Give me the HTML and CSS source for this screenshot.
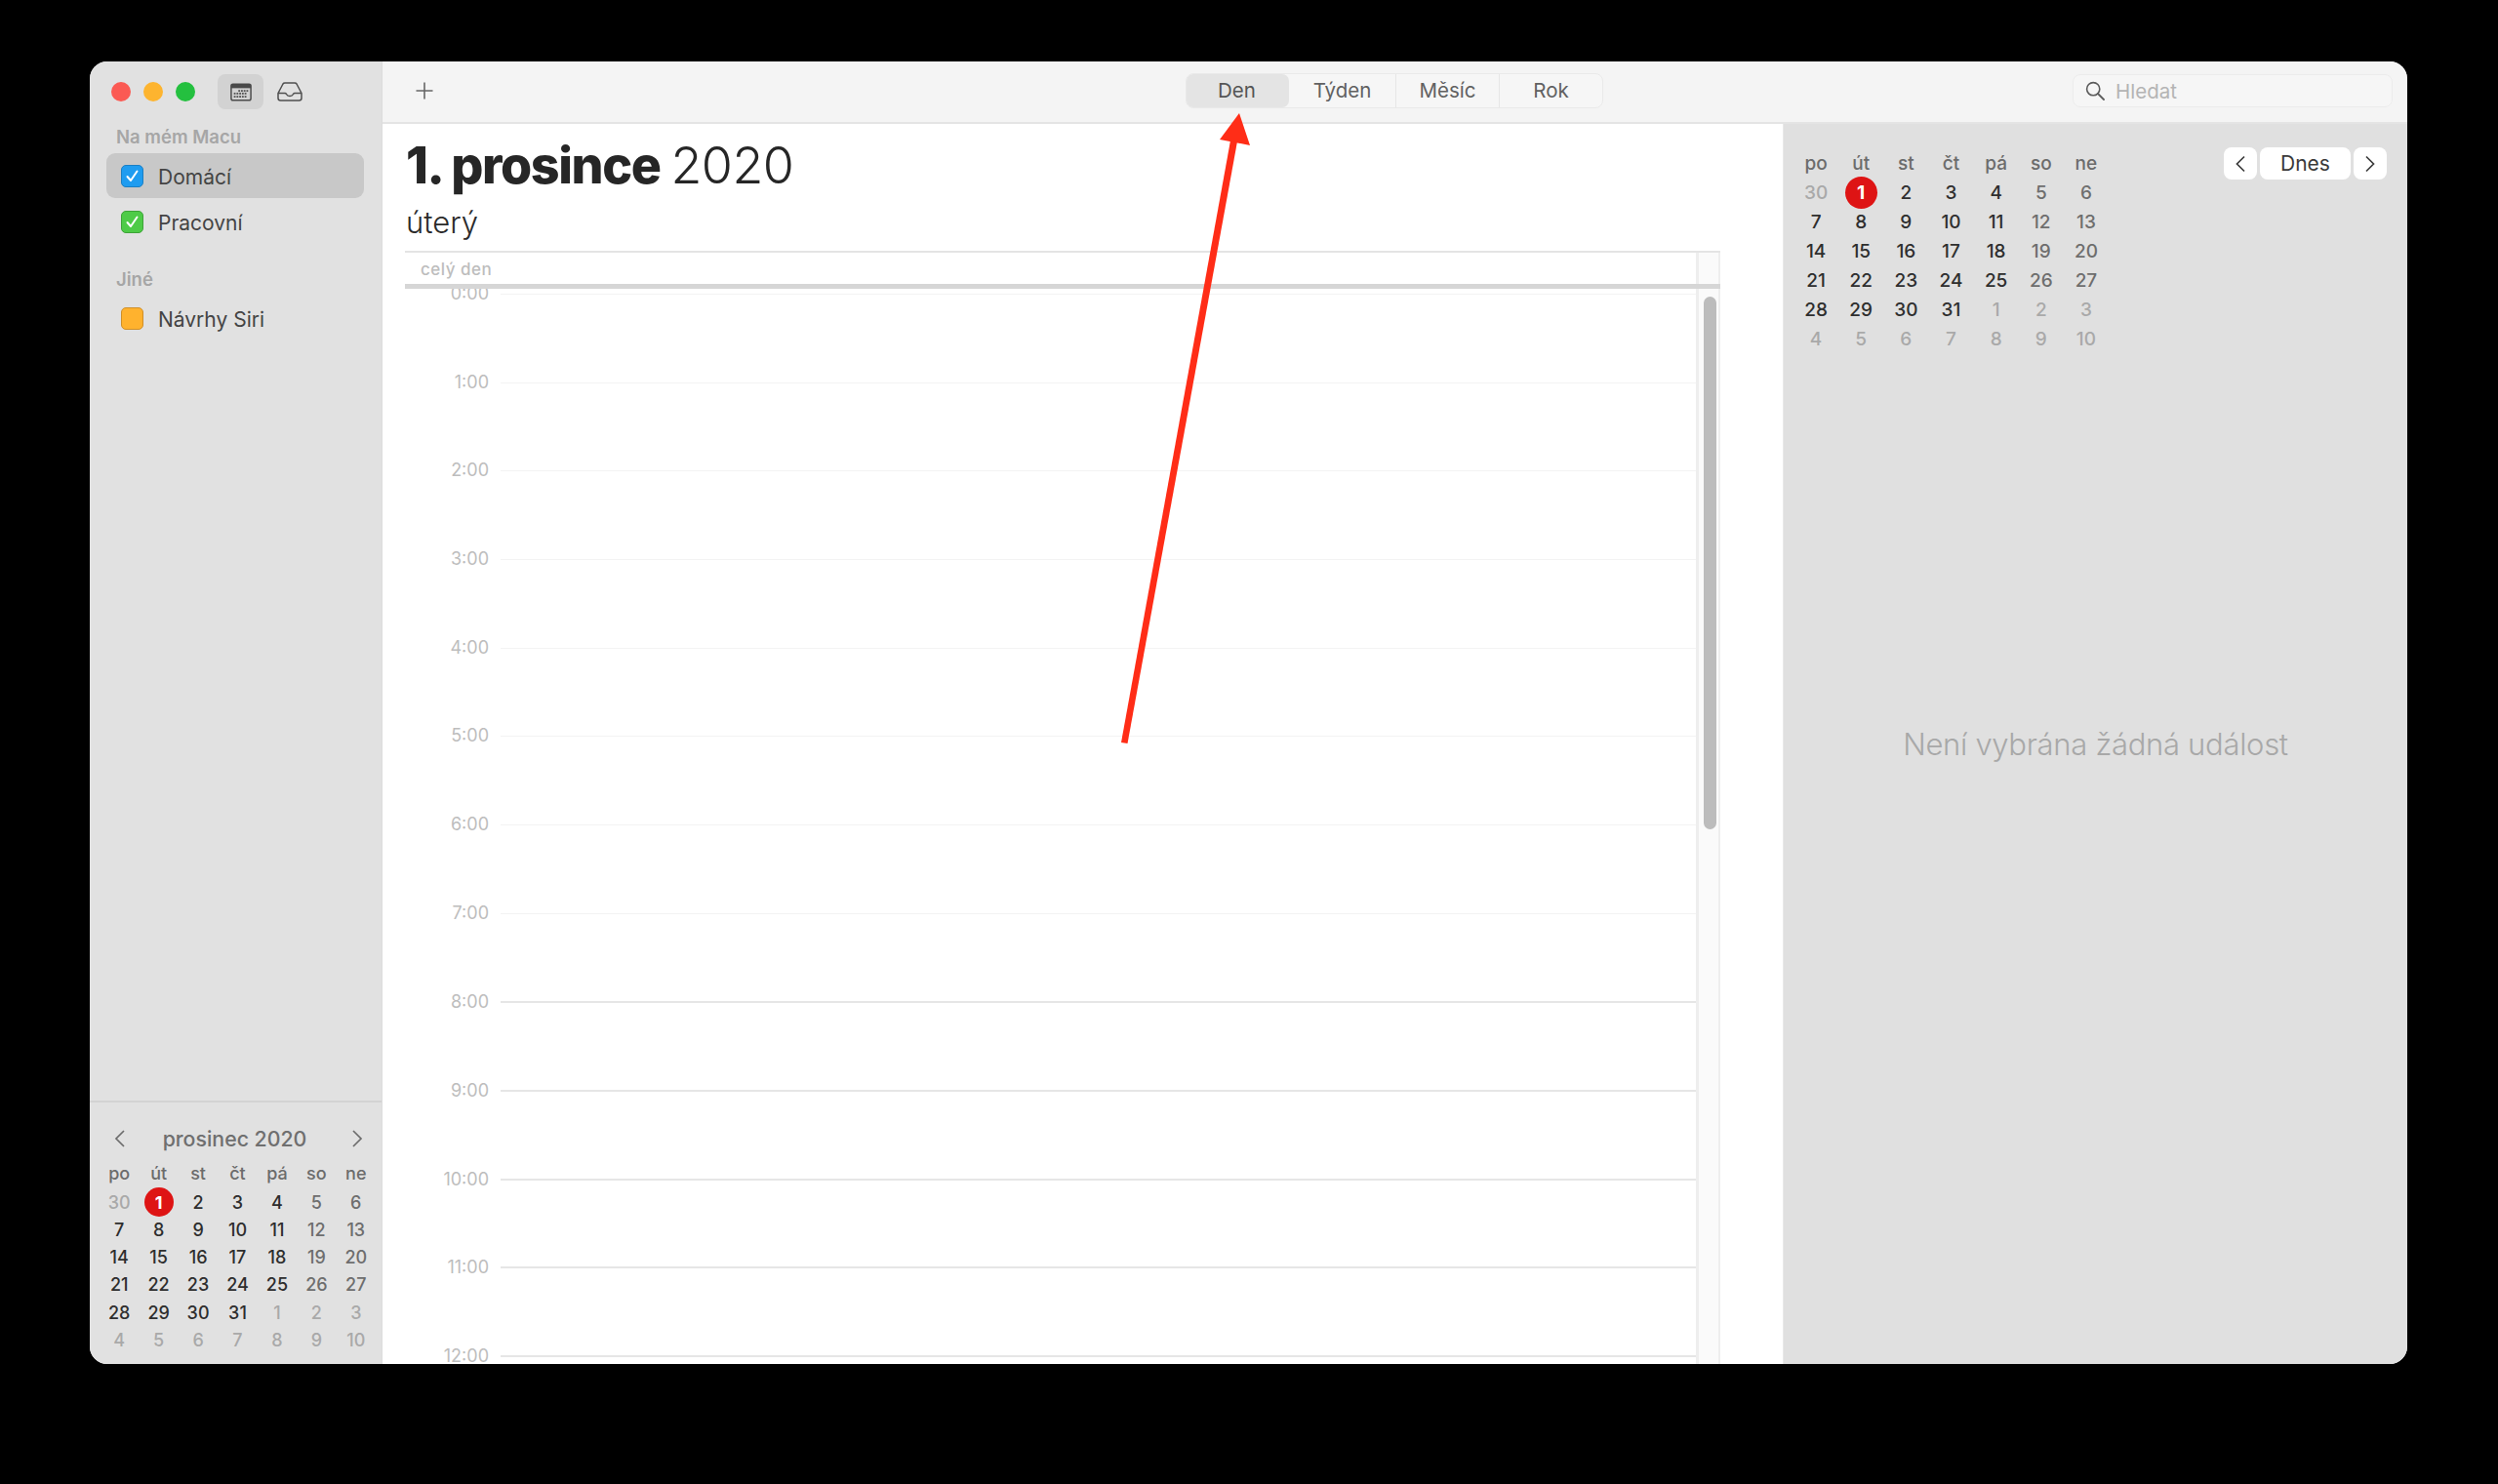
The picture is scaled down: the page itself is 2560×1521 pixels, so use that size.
FILE: index.html
```html
<!DOCTYPE html>
<html lang="cs">
<head>
<meta charset="utf-8">
<title>Kalendář</title>
<link rel="stylesheet" href="styles.css">
</head>
<body>
<div class="window">
  <aside class="sidebar">
    <div class="side-top">
      <span class="light red"></span><span class="light yellow"></span><span class="light green"></span>
      <span class="tool-btn active">
        <svg width="22" height="19" viewBox="0 0 24 20"><rect x="1" y="1" width="22" height="18" rx="2" fill="none" stroke="#4a4a4a" stroke-width="1.6"/><rect x="1" y="1" width="22" height="4.5" fill="#4a4a4a"/><g fill="#555"><rect x="9" y="7.5" width="2" height="2"/><rect x="12" y="7.5" width="2" height="2"/><rect x="15" y="7.5" width="2" height="2"/><rect x="18" y="7.5" width="2" height="2"/><rect x="4" y="10.5" width="2" height="2"/><rect x="7" y="10.5" width="2" height="2"/><rect x="10" y="10.5" width="2" height="2"/><rect x="13" y="10.5" width="2" height="2"/><rect x="16" y="10.5" width="2" height="2"/><rect x="4" y="14" width="2" height="2"/><rect x="7" y="14" width="2" height="2"/><rect x="10" y="14" width="2" height="2"/><rect x="13" y="14" width="2" height="2"/><rect x="16" y="14" width="2" height="2"/></g></svg>
      </span>
      <span class="tool-btn">
        <svg width="26" height="20" viewBox="0 0 26 20"><path d="M1 11.5 L6 2 Q6.6 1 8 1 H18 Q19.4 1 20 2 L25 11.5 V16.5 Q25 19 22.5 19 H3.5 Q1 19 1 16.5 Z M1 11.5 H8 Q9 11.5 9.5 12.5 Q10.5 14.5 13 14.5 Q15.5 14.5 16.5 12.5 Q17 11.5 18 11.5 H25" fill="none" stroke="#4f4f4f" stroke-width="1.5" stroke-linejoin="round"/></svg>
      </span>
    </div>
    <div class="group-label first">Na mém Macu</div>
    <div class="cal-row selected">
      <span class="check blue"><svg width="15" height="15" viewBox="0 0 15 15"><path d="M2.5 8 L6 12 L12.500 2.500" fill="none" stroke="#fff" stroke-width="2" stroke-linecap="round" stroke-linejoin="round"/></svg></span><span class="cal-name">Domácí</span>
    </div>
    <div class="cal-row gap-row">
      <span class="check lime"><svg width="15" height="15" viewBox="0 0 15 15"><path d="M2.5 8 L6 12 L12.500 2.500" fill="none" stroke="#fff" stroke-width="2" stroke-linecap="round" stroke-linejoin="round"/></svg></span><span class="cal-name">Pracovní</span>
    </div>
    <div class="group-label second">Jiné</div>
    <div class="cal-row">
      <span class="check amber"></span><span class="cal-name">Návrhy Siri</span>
    </div>
    <div class="mini">
      <div class="mini-head">
        <svg width="12" height="20" viewBox="0 0 12 20"><path d="M10 2 L2 10 L10 18" fill="none" stroke="#6c6c6c" stroke-width="1.7"/></svg>
        <span class="mini-title">prosinec 2020</span>
        <svg width="12" height="20" viewBox="0 0 12 20"><path d="M2 2 L10 10 L2 18" fill="none" stroke="#6c6c6c" stroke-width="1.7"/></svg>
      </div>
      <div class="month small">
        <b class="dow">po</b><b class="dow">út</b><b class="dow">st</b><b class="dow">čt</b><b class="dow">pá</b><b class="dow">so</b><b class="dow">ne</b>
        <b class="out">30</b><b class="today"><i>1</i></b><b>2</b><b>3</b><b>4</b><b class="wk">5</b><b class="wk">6</b>
        <b>7</b><b>8</b><b>9</b><b>10</b><b>11</b><b class="wk">12</b><b class="wk">13</b>
        <b>14</b><b>15</b><b>16</b><b>17</b><b>18</b><b class="wk">19</b><b class="wk">20</b>
        <b>21</b><b>22</b><b>23</b><b>24</b><b>25</b><b class="wk">26</b><b class="wk">27</b>
        <b>28</b><b>29</b><b>30</b><b>31</b><b class="out">1</b><b class="out">2</b><b class="out">3</b>
        <b class="out">4</b><b class="out">5</b><b class="out">6</b><b class="out">7</b><b class="out">8</b><b class="out">9</b><b class="out">10</b>
      </div>
    </div>
  </aside>
  <div class="main">
    <header class="toolbar">
      <svg class="plus" width="18" height="18" viewBox="0 0 18 18"><path d="M9 0.5 V17.500 M0.5 9 H17.500" stroke="#666" stroke-width="1.6"/></svg>
      <nav class="segments">
        <span class="seg on">Den</span><span class="seg">Týden</span><span class="seg sep">Měsíc</span><span class="seg sep">Rok</span>
      </nav>
      <div class="search">
        <svg width="20" height="20" viewBox="0 0 20 20"><circle cx="8.2" cy="8.2" r="6.6" fill="none" stroke="#5c5c5c" stroke-width="1.6"/><path d="M13 13 L19 19" stroke="#5c5c5c" stroke-width="1.8" stroke-linecap="round"/></svg>
        <span>Hledat</span>
      </div>
    </header>
    <div class="content">
      <section class="day">
        <h1 class="date"><strong>1. prosince</strong> 2020</h1>
        <div class="weekday">úterý</div>
        <div class="allday">
          <div class="allday-cell">celý den</div>
          <div class="gutter"></div>
        </div>
        <div class="timeline">
          <div class="hours">
            <div class="hour"><span>0:00</span></div>
            <div class="hour"><span>1:00</span></div>
            <div class="hour"><span>2:00</span></div>
            <div class="hour"><span>3:00</span></div>
            <div class="hour"><span>4:00</span></div>
            <div class="hour"><span>5:00</span></div>
            <div class="hour"><span>6:00</span></div>
            <div class="hour"><span>7:00</span></div>
            <div class="hour work"><span>8:00</span></div>
            <div class="hour work"><span>9:00</span></div>
            <div class="hour work"><span>10:00</span></div>
            <div class="hour work"><span>11:00</span></div>
            <div class="hour work"><span>12:00</span></div>
          </div>
          <div class="gutter"><div class="thumb"></div></div>
        </div>
      </section>
      <section class="detail">
        <div class="detail-top">
          <div class="month large">
            <b class="dow">po</b><b class="dow">út</b><b class="dow">st</b><b class="dow">čt</b><b class="dow">pá</b><b class="dow">so</b><b class="dow">ne</b>
            <b class="out">30</b><b class="today"><i>1</i></b><b>2</b><b>3</b><b>4</b><b class="wk">5</b><b class="wk">6</b>
            <b>7</b><b>8</b><b>9</b><b>10</b><b>11</b><b class="wk">12</b><b class="wk">13</b>
            <b>14</b><b>15</b><b>16</b><b>17</b><b>18</b><b class="wk">19</b><b class="wk">20</b>
            <b>21</b><b>22</b><b>23</b><b>24</b><b>25</b><b class="wk">26</b><b class="wk">27</b>
            <b>28</b><b>29</b><b>30</b><b>31</b><b class="out">1</b><b class="out">2</b><b class="out">3</b>
            <b class="out">4</b><b class="out">5</b><b class="out">6</b><b class="out">7</b><b class="out">8</b><b class="out">9</b><b class="out">10</b>
          </div>
          <div class="pager">
            <span class="pg arrow"><svg width="12" height="18" viewBox="0 0 12 18"><path d="M10 1.500 L2.500 9 L10 16.500" fill="none" stroke="#3c3c3c" stroke-width="1.7"/></svg></span>
            <span class="pg today-btn">Dnes</span>
            <span class="pg arrow"><svg width="12" height="18" viewBox="0 0 12 18"><path d="M2 1.500 L9.500 9 L2 16.500" fill="none" stroke="#3c3c3c" stroke-width="1.7"/></svg></span>
          </div>
        </div>
        <div class="empty">Není vybrána žádná událost</div>
      </section>
    </div>
  </div>
</div>
<svg class="annotation" width="2560" height="1521" viewBox="0 0 2560 1521">
  <path d="M1149 761 L1155.500 762 L1268 145 L1261 144 Z" fill="#ff2d17"/>
  <path d="M1270 116 L1250 143 L1281 149 Z" fill="#ff2d17"/>
</svg>
</body>
</html>
```
FILE: styles.css
```css
* { box-sizing: border-box; }
html, body { margin: 0; height: 100%; }
body {
  position: relative;
  background: #000;
  padding: 63px 93px 123px 92px;
  font-family: Inter, "Liberation Sans", sans-serif;
  color: #2b2b2b;
  overflow: hidden;
}
.window {
  display: flex;
  width: 2375px;
  height: 1335px;
  border-radius: 18px;
  overflow: hidden;
  background: #fff;
}
.sidebar {
  width: 300px;
  flex: none;
  display: flex;
  flex-direction: column;
  background: #e1e1e1;
  border-right: 1px solid #dcdcdc;
}
.side-top {
  display: flex;
  align-items: center;
  height: 36px;
  margin-top: 13px;
  padding-left: 22px;
}
.light { width: 20px; height: 20px; border-radius: 50%; margin-right: 13px; }
.light.red { background: #fb5a53; }
.light.yellow { background: #fdb42f; }
.light.green { background: #24c03f; margin-right: 23px; }
.tool-btn {
  width: 47px;
  height: 36px;
  display: flex;
  align-items: center;
  justify-content: center;
  border-radius: 8px;
  margin-right: 3px;
}
.tool-btn.active { background: #d2d2d2; }
.group-label {
  font-size: 18.500px;
  font-weight: 600;
  line-height: 22px;
  color: #a6a6a6;
  padding-left: 27px;
}
.group-label.first { margin-top: 17px; margin-bottom: 6px; }
.group-label.second { margin-top: 25px; margin-bottom: 6px; }
.cal-row {
  display: flex;
  align-items: center;
  height: 46px;
  margin-left: 17px;
  margin-right: 18px;
  border-radius: 9px;
  font-size: 21px;
  color: #444;
}
.cal-row.selected { background: #c8c8c8; }
.cal-row.gap-row { margin-top: 1px; }
.cal-name { padding-top: 2px; }
.check {
  width: 23px;
  height: 23px;
  margin: 0 15px 0 15px;
  border-radius: 5px;
  display: flex;
  align-items: center;
  justify-content: center;
}
.check.blue { background: #1f9cf0; border: 1px solid #1a7fc4; }
.check.lime { background: #4ecb47; border: 1px solid #3da338; }
.check.amber { background: #ffb22e; border: 1px solid #cf8f28; }
.mini {
  margin-top: auto;
  height: 270px;
  border-top: 2px solid #d3d3d3;
  padding: 0 6px 0 10px;
}
.mini-head {
  display: flex;
  align-items: center;
  justify-content: space-between;
  height: 30px;
  margin-top: 22px;
  padding: 0 13px 0 15px;
  font-size: 21.300px;
  font-weight: 500;
  color: #6f6f6f;
}
.mini-title { margin-right: 8px; }
.month { display: grid; grid-template-columns: repeat(7, 1fr); text-align: center; }
.month b { display: flex; align-items: center; justify-content: center; font-weight: 500; color: #2e2e2e; }
.month b.dow { color: #6c6c6c; }
.month b.wk { color: #6e6e6e; }
.month b.out { color: #a9a9a9; }
.month b.today i {
  display: flex;
  align-items: center;
  justify-content: center;
  border-radius: 50%;
  background: #de1414;
  color: #fff;
  font-style: normal;
  font-weight: 700;
}
.month.small { margin-top: 8px; grid-auto-rows: 28.200px; font-size: 18px; }
.month.small b.dow { padding-bottom: 3px; }
.month.small b.today i { width: 30px; height: 30px; }
.month.large { width: 323px; grid-auto-rows: 30px; font-size: 19px; margin-top: 25px; }
.month.large b.today i { width: 33px; height: 33px; }
.main { flex: 1; min-width: 0; display: flex; flex-direction: column; }
.toolbar {
  position: relative;
  display: flex;
  align-items: center;
  height: 64px;
  flex: none;
  background: #f4f4f4;
  border-bottom: 2px solid #e4e4e4;
  padding-left: 34px;
}
.plus { margin-top: -3px; }
.segments {
  display: flex;
  align-items: stretch;
  width: 428px;
  height: 36px;
  margin-left: 771px;
  margin-top: -3px;
  border: 1px solid #e9e9e9;
  border-radius: 8px;
  background: #f6f6f6;
  font-size: 20.500px;
  color: #616161;
}
.seg {
  width: 106px;
  display: flex;
  align-items: center;
  justify-content: center;
  position: relative;
}
.seg.on { width: 105px; padding-right: 2px; background: #e4e4e4; border-radius: 7px; color: #555; }
.seg.sep { border-left: 1px solid #e6e6e6; }
.seg:nth-child(2) { width: 109px; }
.search {
  display: flex;
  align-items: center;
  gap: 11px;
  width: 328px;
  height: 34px;
  margin-left: 481px;
  margin-top: -2px;
  padding-left: 12px;
  background: #f6f6f6;
  border: 1px solid #ececec;
  border-radius: 8px;
  font-size: 20.500px;
  color: #b4b4b4;
}
.content { flex: 1; min-height: 0; display: flex; }
.day {
  flex: 1;
  min-width: 0;
  display: flex;
  flex-direction: column;
  padding: 0 64px 0 23px;
}
.date {
  margin: 11px 0 0 1px;
  font-size: 52px;
  line-height: 64px;
  font-weight: 300;
  letter-spacing: -0.6px;
  word-spacing: -3px;
  color: #262626;
  white-space: nowrap;
}
.date strong { font-weight: 800; letter-spacing: -1.400px; word-spacing: 0; }
.weekday {
  margin: 7px 0 0 1px;
  font-size: 31px;
  line-height: 38px;
  font-weight: 300;
  color: #2a2a2a;
}
.allday {
  display: flex;
  height: 39px;
  margin-top: 10px;
  border-top: 2px solid #e4e4e4;
  border-bottom: 5px solid #d6d6d6;
  flex: none;
}
.allday-cell {
  flex: 1;
  padding-left: 16px;
  font-size: 17px;
  line-height: 34px;
  font-weight: 500;
  letter-spacing: 0.5px;
  color: #bdbdbd;
}
.gutter {
  width: 25px;
  flex: none;
  background: #fafafa;
  border-left: 3px solid #eeeeee;
  border-right: 2px solid #eeeeee;
}
.timeline { flex: 1; min-height: 0; display: flex; overflow: hidden; }
.hours { flex: 1; min-width: 0; padding-top: 5px; }
.hour {
  height: 90.670px;
  margin-left: 98px;
  border-top: 1px solid #f3f3f3;
  position: relative;
}
.hour.work { border-top: 2px solid #e6e6e6; }
.hour span {
  position: absolute;
  right: 100%;
  top: -12px;
  margin-right: 12px;
  font-size: 18px;
  line-height: 22px;
  color: #bdbdbd;
}
.thumb {
  width: 13px;
  height: 546px;
  margin: 8px 0 0 5px;
  border-radius: 7px;
  background: #bcbcbc;
}
.detail {
  width: 640px;
  flex: none;
  display: flex;
  flex-direction: column;
  background: #e0e0e0;
  border-left: 1px solid #e8e8e8;
}
.detail-top { display: flex; justify-content: space-between; padding: 0 21px 0 10px; }
.pager { display: flex; gap: 3px; margin-top: 24px; height: 33px; }
.pg {
  display: flex;
  align-items: center;
  justify-content: center;
  background: #fff;
  border-radius: 8px;
  font-size: 21px;
  color: #3a3a3a;
}
.pg.arrow { width: 34px; }
.pg.today-btn { width: 93px; }
.empty {
  margin-top: 381px;
  text-align: center;
  font-size: 31px;
  line-height: 40px;
  font-weight: 300;
  letter-spacing: -0.3px;
  color: #a8a8a8;
}
.annotation { position: absolute; left: 0; top: 0; pointer-events: none; }
```
